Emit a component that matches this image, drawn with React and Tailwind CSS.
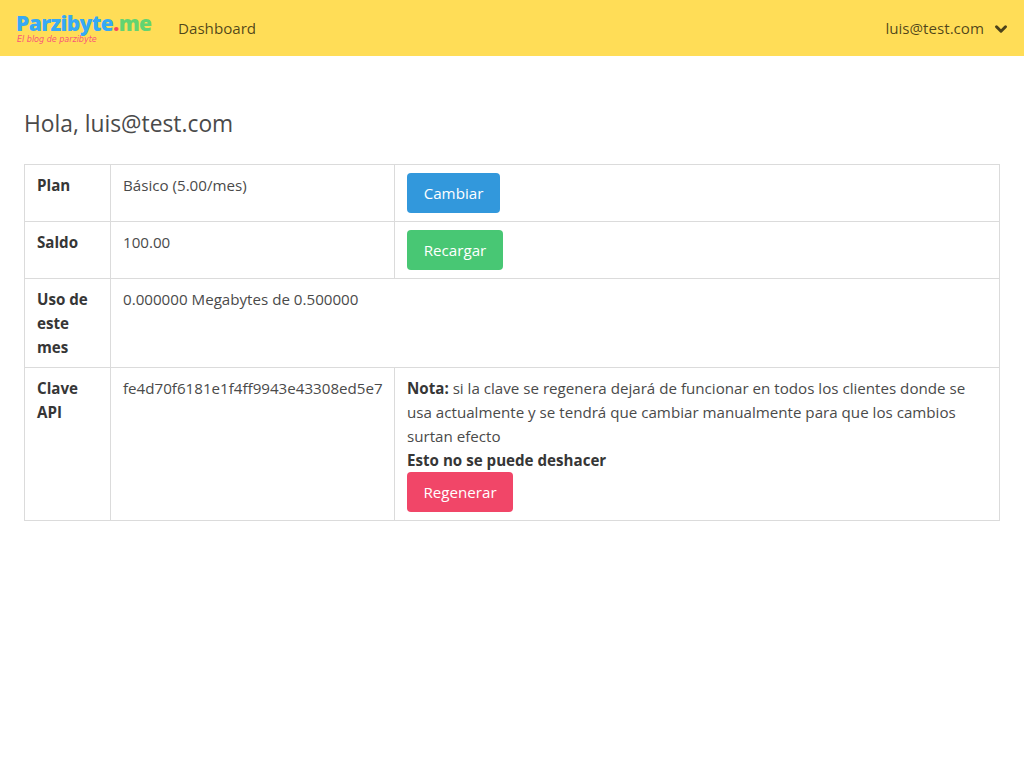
import { ChevronDown } from "lucide-react";

function Btn({ color, width, children }) {
  return (
    <a className={`inline-flex h-10 items-center justify-center rounded text-white ${color} ${width}`}>
      {children}
    </a>
  );
}

const th = "border border-[#dbdbdb] px-3 py-2 align-top text-left font-bold text-[#363636]";
const td = "border border-[#dbdbdb] px-3 py-2 align-top";

export default function App() {
  return (
    <div className="min-h-screen bg-white text-[15.15px] leading-6 text-[#4a4a4a] [font-family:'Open_Sans',sans-serif]">
      {/* Navbar */}
      <nav className="flex h-14 items-center justify-between bg-[#ffdd57] text-[rgba(0,0,0,0.7)]">
        <div className="flex items-center">
          <div className="ml-4 flex w-[137px] flex-col">
            <div className="text-[21px] leading-[23px] font-extrabold tracking-[-0.6px] whitespace-nowrap">
              <span className="text-[#36a9f5]">Parzibyte</span>
              <span className="text-[#f9455f]">.</span>
              <span className="text-[#63d471]">me</span>
            </div>
            <div className="ml-px text-[8px] leading-[9px] italic text-[#f9557a] [font-family:'DejaVu_Sans',sans-serif]">El blog de parzibyte</div>
          </div>
          <a className="ml-[25px]">Dashboard</a>
        </div>
        <div className="flex items-center">
          <span>luis@test.com</span>
          <ChevronDown className="mt-px mr-[14px] ml-[8px] h-[18px] w-[18px]" strokeWidth={4} />
        </div>
      </nav>

      {/* Contenido */}
      <section className="px-6 pt-12">
        <h1 className="mb-5 text-[22.8px] leading-[40px] text-[#4a4a4a]">Hola, luis@test.com</h1>
        <table className="w-full table-fixed border-collapse">
          <colgroup>
            <col className="w-[86px]" />
            <col className="w-[284px]" />
            <col />
          </colgroup>
          <tbody>
            <tr>
              <th className={th}>Plan</th>
              <td className={td}>Básico (5.00/mes)</td>
              <td className={td}>
                <Btn color="bg-[#3298dc]" width="w-[93px]">Cambiar</Btn>
              </td>
            </tr>
            <tr>
              <th className={th}>Saldo</th>
              <td className={td}>100.00</td>
              <td className={td}>
                <Btn color="bg-[#48c774]" width="w-[96px]">Recargar</Btn>
              </td>
            </tr>
            <tr>
              <th className={th}>Uso de este mes</th>
              <td className={td} colSpan={2}>0.000000 Megabytes de 0.500000</td>
            </tr>
            <tr>
              <th className={th}>Clave API</th>
              <td className={td}>fe4d70f6181e1f4ff9943e43308ed5e7</td>
              <td className={td}>
                <strong className="font-bold text-[#363636]">Nota:</strong> si la clave se regenera dejará de funcionar en todos los clientes donde se usa actualmente y se tendrá que cambiar manualmente para que los cambios surtan efecto
                <br />
                <strong className="font-bold text-[#363636]">Esto no se puede deshacer</strong>
                <br />
                <Btn color="bg-[#f14668]" width="w-[106px]">Regenerar</Btn>
              </td>
            </tr>
          </tbody>
        </table>
      </section>
    </div>
  );
}
